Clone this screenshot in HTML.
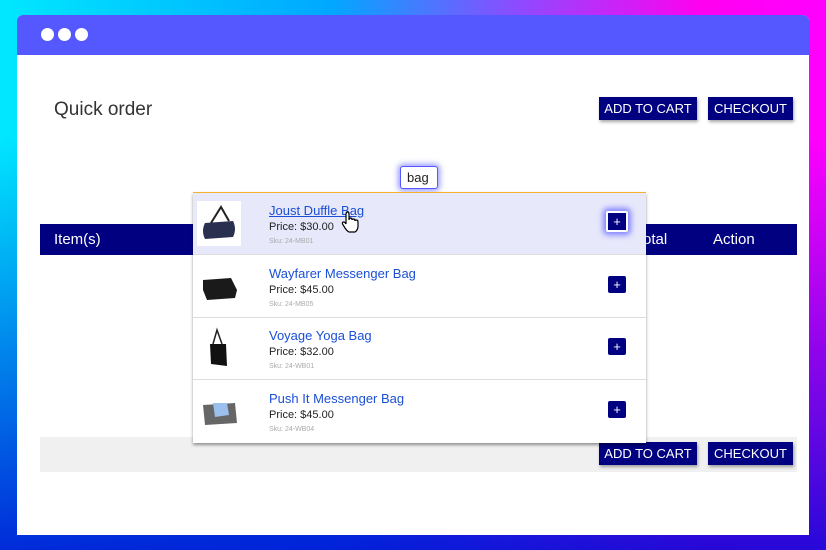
<!DOCTYPE html>
<html><head><meta charset="utf-8"><style>
*{margin:0;padding:0;box-sizing:border-box}
body{width:826px;height:550px;overflow:hidden;font-family:"Liberation Sans",sans-serif;position:relative;
background:linear-gradient(180deg,rgba(0,0,0,0) 25%,rgba(0,10,210,.85) 100%),linear-gradient(90deg,#00e8ff 0%,#00a8ff 40%,#8a4dff 62%,#ff00f0 85%,#ff00ff 100%)}
.win{position:absolute;left:17px;top:15px;width:792px;height:520px;background:#fff;border-radius:6px 6px 0 0;overflow:hidden}
.hdr{height:40px;background:#5558ff;position:relative}
.dot{position:absolute;top:13px;width:13px;height:13px;border-radius:50%;background:#fff}
.abs{position:absolute}
.btn{position:absolute;background:#000080;color:#fff;font-size:13px;height:23px;line-height:23px;text-align:center;box-shadow:1px 2px 3px rgba(0,0,0,.35)}
.row{position:absolute;left:0;width:453px;height:62px;border-bottom:1px solid #ddd}
.t{position:absolute;left:76px;top:10px;font-size:13px;color:#1a4fd6}
.p{position:absolute;left:76px;top:28px;font-size:11px;color:#222}
.s{position:absolute;left:76px;top:45px;font-size:7px;color:#aaa}
.pl{position:absolute;left:415px;top:20px;width:18px;height:17px;background:#000080;color:#fff;font-size:13px;line-height:17px;text-align:center;border-radius:2px}
.img{position:absolute;left:4px;top:8px;width:44px;height:45px}
</style></head><body>
<div class="win">
<div class="hdr"><div class="dot" style="left:24px"></div><div class="dot" style="left:41px"></div><div class="dot" style="left:58px"></div></div>
<div class="abs" style="left:37px;top:84px;font-size:19px;color:#333">Quick order</div>
<div class="btn" style="left:582px;top:82px;width:98px">ADD TO CART</div>
<div class="btn" style="left:691px;top:82px;width:85px">CHECKOUT</div>
<div class="abs" style="left:23px;top:209px;width:757px;height:31px;background:#000080;color:#fff;font-size:15px">
<span class="abs" style="left:14px;top:7px">Item(s)</span><span class="abs" style="left:603px;top:7px">otal</span><span class="abs" style="left:673px;top:7px">Action</span></div>
<div class="abs" style="left:23px;top:422px;width:757px;height:35px;background:#f0f0f0"></div>
<div class="btn" style="left:582px;top:427px;width:98px">ADD TO CART</div>
<div class="btn" style="left:691px;top:427px;width:85px">CHECKOUT</div>
<div class="abs" style="left:383px;top:151px;width:38px;height:23px;border:1px solid #5558ff;border-radius:3px;box-shadow:0 0 6px 2px rgba(85,88,255,.6);background:#fff;font-size:13px;padding:3px 0 0 6px;color:#222">bag</div>
</div>
<div class="abs" style="left:193px;top:192px;width:453px;height:251px;background:#fff;border-top:1px solid #f5b030;box-shadow:0 2px 3px rgba(0,0,0,.4)">
<div class="row" style="top:0;background:#e8e8fb"><div class="img" style="background:#fff"><svg width="44" height="45"><path d="M8 22 L36 20 Q40 28 36 36 L8 38 Q4 30 8 22Z" fill="#2a3050"/><path d="M14 22 L24 6 L32 20" stroke="#222" fill="none" stroke-width="2"/></svg></div>
<div class="t" style="text-decoration:underline">Joust Duffle Bag</div><div class="p">Price: $30.00</div><div class="s">Sku: 24-MB01</div>
<div class="pl" style="border:2px solid #fff;box-shadow:0 0 6px 3px rgba(85,88,255,.7);width:22px;height:21px;left:413px;top:18px;line-height:17px">+</div></div>
<div class="row" style="top:63px"><div class="img"><svg width="44" height="45"><path d="M6 16 L34 14 L40 26 L38 34 L10 36 L6 26Z" fill="#1a1a1a"/></svg></div>
<div class="t">Wayfarer Messenger Bag</div><div class="p">Price: $45.00</div><div class="s">Sku: 24-MB05</div><div class="pl">+</div></div>
<div class="row" style="top:125px"><div class="img"><svg width="44" height="45"><path d="M13 18 L29 18 L30 40 L14 38Z" fill="#111"/><path d="M16 18 L20 4 L25 18" stroke="#222" fill="none" stroke-width="1.5"/></svg></div>
<div class="t">Voyage Yoga Bag</div><div class="p">Price: $32.00</div><div class="s">Sku: 24-WB01</div><div class="pl">+</div></div>
<div class="row" style="top:188px;border:none"><div class="img"><svg width="44" height="45"><path d="M6 16 L38 14 L40 34 L8 36Z" fill="#666"/><path d="M16 14 L30 14 L32 26 L18 28Z" fill="#9cc0ee"/></svg></div>
<div class="t">Push It Messenger Bag</div><div class="p">Price: $45.00</div><div class="s">Sku: 24-WB04</div><div class="pl">+</div></div>
</div>
<svg class="abs" style="left:341px;top:211px" width="18" height="22" viewBox="0 0 18 22"><path d="M5 12 V3 Q5 1 6.5 1 Q8 1 8 3 V9 Q8 7 9.5 7 Q11 7 11 9 Q11 8 12.5 8 Q14 8 14 10 Q14 9 15.2 9 Q17 9 17 11 V15 Q17 19 14 21 H8 Q6 20 4 17 L1.5 13 Q1 11 2.5 11 Q4 11 5 13Z" fill="#fff" stroke="#000" stroke-width="1.2"/></svg>
</body></html>
